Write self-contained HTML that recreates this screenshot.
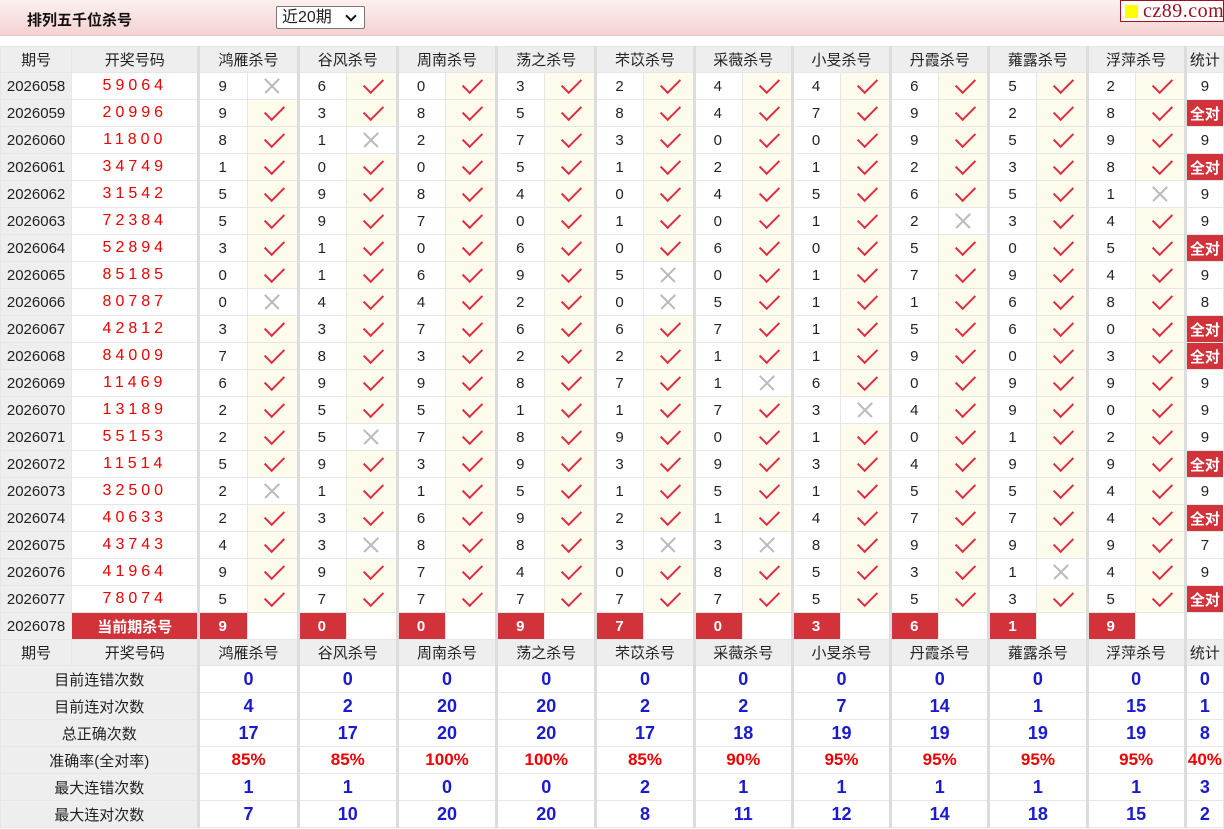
<!DOCTYPE html>
<html><head><meta charset="utf-8">
<style>
*{margin:0;padding:0;box-sizing:border-box}
body{width:1224px;height:829px;overflow:hidden;background:#fff;font-family:"Liberation Sans","Noto Sans CJK SC",sans-serif;color:#222}
.top{height:36px;background:linear-gradient(#fdf0f0,#f4d2d2);border-bottom:1px solid #e8c8c8;position:relative}
.top .t{position:absolute;left:27px;top:9px;font-size:15px;font-weight:bold;color:#111}
.top .s{position:absolute;left:276px;top:6px;width:89px;height:23px;border:1px solid #777;border-radius:2px;background:#fff;font-size:16px;padding-left:5px;line-height:21px}
.top .s:after{content:"";position:absolute;right:9px;top:5px;width:6px;height:6px;border-right:2px solid #111;border-bottom:2px solid #111;transform:rotate(45deg)}
.logo{position:absolute;right:0;top:0;width:104px;height:22px;border:1px solid #a01020;background:#fff;font-family:"Liberation Serif",serif;font-size:20px;color:#9a1020;line-height:20px;padding-left:22px;letter-spacing:.5px}
.logo:before{content:"";position:absolute;left:4px;top:4px;width:13px;height:13px;background:#ff0}
table{position:absolute;top:46px;left:0;border-collapse:collapse;table-layout:fixed;width:1224px}
td{border:1px solid #e6e6e6;height:27px;text-align:center;font-size:15px;padding:0;white-space:nowrap;overflow:hidden;position:relative}
tr.h td{background:#eee;height:26px;font-size:15px;color:#222}
td.p{background:#eee}
td.d{color:#e00;letter-spacing:4px;font-size:16px}
td.g{border-left:3px solid #dcdcdc;text-align:left;padding-left:18px}
tr.h td.g{text-align:center;padding-left:0}
td.v{background:#fdfcec}
td.v:after{content:"";position:absolute;left:21px;top:1px;width:9px;height:17px;border-right:2.5px solid #e02c40;border-bottom:2.5px solid #e02c40;transform:rotate(45deg)}
td.x:before,td.x:after{content:"";position:absolute;left:14px;top:12px;width:20px;height:1.5px;background:#bbb;transform:rotate(45deg)}
td.x:after{transform:rotate(-45deg)}
td.q{color:#fff;font-weight:bold;background:#d2323a}
td.a{background:#d2323a;color:#fff;font-weight:bold;font-size:15px}
td.gs{border-left:3px solid #dcdcdc}
td.L{background:#eee}
td.b{color:#1a1ad0;font-weight:bold;font-size:18px}
td.r{color:#e00;font-weight:bold;font-size:17px}
</style></head><body>
<div class="top"><div class="t">排列五千位杀号</div><div class="s">近20期</div><div class="logo">cz89.com</div></div>
<table>
<colgroup><col style="width:71px"><col style="width:127px">
<col style="width:48px"><col style="width:51px"><col style="width:48px"><col style="width:51px"><col style="width:48px"><col style="width:51px"><col style="width:48px"><col style="width:51px"><col style="width:48px"><col style="width:50px"><col style="width:48px"><col style="width:50px"><col style="width:48px"><col style="width:50px"><col style="width:48px"><col style="width:50px"><col style="width:48px"><col style="width:50px"><col style="width:48px"><col style="width:50px"><col style="width:38px"></colgroup>
<tr class="h"><td>期号</td><td>开奖号码</td><td class="g" colspan="2">鸿雁杀号</td><td class="g" colspan="2">谷风杀号</td><td class="g" colspan="2">周南杀号</td><td class="g" colspan="2">荡之杀号</td><td class="g" colspan="2">芣苡杀号</td><td class="g" colspan="2">采薇杀号</td><td class="g" colspan="2">小旻杀号</td><td class="g" colspan="2">丹霞杀号</td><td class="g" colspan="2">蕹露杀号</td><td class="g" colspan="2">浮萍杀号</td><td class="g">统计</td></tr>
<tr><td class="p">2026058</td><td class="d">59064</td><td class="g">9</td><td class="x"></td><td class="g">6</td><td class="v"></td><td class="g">0</td><td class="v"></td><td class="g">3</td><td class="v"></td><td class="g">2</td><td class="v"></td><td class="g">4</td><td class="v"></td><td class="g">4</td><td class="v"></td><td class="g">6</td><td class="v"></td><td class="g">5</td><td class="v"></td><td class="g">2</td><td class="v"></td><td class="gs">9</td></tr>
<tr><td class="p">2026059</td><td class="d">20996</td><td class="g">9</td><td class="v"></td><td class="g">3</td><td class="v"></td><td class="g">8</td><td class="v"></td><td class="g">5</td><td class="v"></td><td class="g">8</td><td class="v"></td><td class="g">4</td><td class="v"></td><td class="g">7</td><td class="v"></td><td class="g">9</td><td class="v"></td><td class="g">2</td><td class="v"></td><td class="g">8</td><td class="v"></td><td class="gs a">全对</td></tr>
<tr><td class="p">2026060</td><td class="d">11800</td><td class="g">8</td><td class="v"></td><td class="g">1</td><td class="x"></td><td class="g">2</td><td class="v"></td><td class="g">7</td><td class="v"></td><td class="g">3</td><td class="v"></td><td class="g">0</td><td class="v"></td><td class="g">0</td><td class="v"></td><td class="g">9</td><td class="v"></td><td class="g">5</td><td class="v"></td><td class="g">9</td><td class="v"></td><td class="gs">9</td></tr>
<tr><td class="p">2026061</td><td class="d">34749</td><td class="g">1</td><td class="v"></td><td class="g">0</td><td class="v"></td><td class="g">0</td><td class="v"></td><td class="g">5</td><td class="v"></td><td class="g">1</td><td class="v"></td><td class="g">2</td><td class="v"></td><td class="g">1</td><td class="v"></td><td class="g">2</td><td class="v"></td><td class="g">3</td><td class="v"></td><td class="g">8</td><td class="v"></td><td class="gs a">全对</td></tr>
<tr><td class="p">2026062</td><td class="d">31542</td><td class="g">5</td><td class="v"></td><td class="g">9</td><td class="v"></td><td class="g">8</td><td class="v"></td><td class="g">4</td><td class="v"></td><td class="g">0</td><td class="v"></td><td class="g">4</td><td class="v"></td><td class="g">5</td><td class="v"></td><td class="g">6</td><td class="v"></td><td class="g">5</td><td class="v"></td><td class="g">1</td><td class="x"></td><td class="gs">9</td></tr>
<tr><td class="p">2026063</td><td class="d">72384</td><td class="g">5</td><td class="v"></td><td class="g">9</td><td class="v"></td><td class="g">7</td><td class="v"></td><td class="g">0</td><td class="v"></td><td class="g">1</td><td class="v"></td><td class="g">0</td><td class="v"></td><td class="g">1</td><td class="v"></td><td class="g">2</td><td class="x"></td><td class="g">3</td><td class="v"></td><td class="g">4</td><td class="v"></td><td class="gs">9</td></tr>
<tr><td class="p">2026064</td><td class="d">52894</td><td class="g">3</td><td class="v"></td><td class="g">1</td><td class="v"></td><td class="g">0</td><td class="v"></td><td class="g">6</td><td class="v"></td><td class="g">0</td><td class="v"></td><td class="g">6</td><td class="v"></td><td class="g">0</td><td class="v"></td><td class="g">5</td><td class="v"></td><td class="g">0</td><td class="v"></td><td class="g">5</td><td class="v"></td><td class="gs a">全对</td></tr>
<tr><td class="p">2026065</td><td class="d">85185</td><td class="g">0</td><td class="v"></td><td class="g">1</td><td class="v"></td><td class="g">6</td><td class="v"></td><td class="g">9</td><td class="v"></td><td class="g">5</td><td class="x"></td><td class="g">0</td><td class="v"></td><td class="g">1</td><td class="v"></td><td class="g">7</td><td class="v"></td><td class="g">9</td><td class="v"></td><td class="g">4</td><td class="v"></td><td class="gs">9</td></tr>
<tr><td class="p">2026066</td><td class="d">80787</td><td class="g">0</td><td class="x"></td><td class="g">4</td><td class="v"></td><td class="g">4</td><td class="v"></td><td class="g">2</td><td class="v"></td><td class="g">0</td><td class="x"></td><td class="g">5</td><td class="v"></td><td class="g">1</td><td class="v"></td><td class="g">1</td><td class="v"></td><td class="g">6</td><td class="v"></td><td class="g">8</td><td class="v"></td><td class="gs">8</td></tr>
<tr><td class="p">2026067</td><td class="d">42812</td><td class="g">3</td><td class="v"></td><td class="g">3</td><td class="v"></td><td class="g">7</td><td class="v"></td><td class="g">6</td><td class="v"></td><td class="g">6</td><td class="v"></td><td class="g">7</td><td class="v"></td><td class="g">1</td><td class="v"></td><td class="g">5</td><td class="v"></td><td class="g">6</td><td class="v"></td><td class="g">0</td><td class="v"></td><td class="gs a">全对</td></tr>
<tr><td class="p">2026068</td><td class="d">84009</td><td class="g">7</td><td class="v"></td><td class="g">8</td><td class="v"></td><td class="g">3</td><td class="v"></td><td class="g">2</td><td class="v"></td><td class="g">2</td><td class="v"></td><td class="g">1</td><td class="v"></td><td class="g">1</td><td class="v"></td><td class="g">9</td><td class="v"></td><td class="g">0</td><td class="v"></td><td class="g">3</td><td class="v"></td><td class="gs a">全对</td></tr>
<tr><td class="p">2026069</td><td class="d">11469</td><td class="g">6</td><td class="v"></td><td class="g">9</td><td class="v"></td><td class="g">9</td><td class="v"></td><td class="g">8</td><td class="v"></td><td class="g">7</td><td class="v"></td><td class="g">1</td><td class="x"></td><td class="g">6</td><td class="v"></td><td class="g">0</td><td class="v"></td><td class="g">9</td><td class="v"></td><td class="g">9</td><td class="v"></td><td class="gs">9</td></tr>
<tr><td class="p">2026070</td><td class="d">13189</td><td class="g">2</td><td class="v"></td><td class="g">5</td><td class="v"></td><td class="g">5</td><td class="v"></td><td class="g">1</td><td class="v"></td><td class="g">1</td><td class="v"></td><td class="g">7</td><td class="v"></td><td class="g">3</td><td class="x"></td><td class="g">4</td><td class="v"></td><td class="g">9</td><td class="v"></td><td class="g">0</td><td class="v"></td><td class="gs">9</td></tr>
<tr><td class="p">2026071</td><td class="d">55153</td><td class="g">2</td><td class="v"></td><td class="g">5</td><td class="x"></td><td class="g">7</td><td class="v"></td><td class="g">8</td><td class="v"></td><td class="g">9</td><td class="v"></td><td class="g">0</td><td class="v"></td><td class="g">1</td><td class="v"></td><td class="g">0</td><td class="v"></td><td class="g">1</td><td class="v"></td><td class="g">2</td><td class="v"></td><td class="gs">9</td></tr>
<tr><td class="p">2026072</td><td class="d">11514</td><td class="g">5</td><td class="v"></td><td class="g">9</td><td class="v"></td><td class="g">3</td><td class="v"></td><td class="g">9</td><td class="v"></td><td class="g">3</td><td class="v"></td><td class="g">9</td><td class="v"></td><td class="g">3</td><td class="v"></td><td class="g">4</td><td class="v"></td><td class="g">9</td><td class="v"></td><td class="g">9</td><td class="v"></td><td class="gs a">全对</td></tr>
<tr><td class="p">2026073</td><td class="d">32500</td><td class="g">2</td><td class="x"></td><td class="g">1</td><td class="v"></td><td class="g">1</td><td class="v"></td><td class="g">5</td><td class="v"></td><td class="g">1</td><td class="v"></td><td class="g">5</td><td class="v"></td><td class="g">1</td><td class="v"></td><td class="g">5</td><td class="v"></td><td class="g">5</td><td class="v"></td><td class="g">4</td><td class="v"></td><td class="gs">9</td></tr>
<tr><td class="p">2026074</td><td class="d">40633</td><td class="g">2</td><td class="v"></td><td class="g">3</td><td class="v"></td><td class="g">6</td><td class="v"></td><td class="g">9</td><td class="v"></td><td class="g">2</td><td class="v"></td><td class="g">1</td><td class="v"></td><td class="g">4</td><td class="v"></td><td class="g">7</td><td class="v"></td><td class="g">7</td><td class="v"></td><td class="g">4</td><td class="v"></td><td class="gs a">全对</td></tr>
<tr><td class="p">2026075</td><td class="d">43743</td><td class="g">4</td><td class="v"></td><td class="g">3</td><td class="x"></td><td class="g">8</td><td class="v"></td><td class="g">8</td><td class="v"></td><td class="g">3</td><td class="x"></td><td class="g">3</td><td class="x"></td><td class="g">8</td><td class="v"></td><td class="g">9</td><td class="v"></td><td class="g">9</td><td class="v"></td><td class="g">9</td><td class="v"></td><td class="gs">7</td></tr>
<tr><td class="p">2026076</td><td class="d">41964</td><td class="g">9</td><td class="v"></td><td class="g">9</td><td class="v"></td><td class="g">7</td><td class="v"></td><td class="g">4</td><td class="v"></td><td class="g">0</td><td class="v"></td><td class="g">8</td><td class="v"></td><td class="g">5</td><td class="v"></td><td class="g">3</td><td class="v"></td><td class="g">1</td><td class="x"></td><td class="g">4</td><td class="v"></td><td class="gs">9</td></tr>
<tr><td class="p">2026077</td><td class="d">78074</td><td class="g">5</td><td class="v"></td><td class="g">7</td><td class="v"></td><td class="g">7</td><td class="v"></td><td class="g">7</td><td class="v"></td><td class="g">7</td><td class="v"></td><td class="g">7</td><td class="v"></td><td class="g">5</td><td class="v"></td><td class="g">5</td><td class="v"></td><td class="g">3</td><td class="v"></td><td class="g">5</td><td class="v"></td><td class="gs a">全对</td></tr>
<tr><td class="p">2026078</td><td class="q">当前期杀号</td><td class="g q">9</td><td></td><td class="g q">0</td><td></td><td class="g q">0</td><td></td><td class="g q">9</td><td></td><td class="g q">7</td><td></td><td class="g q">0</td><td></td><td class="g q">3</td><td></td><td class="g q">6</td><td></td><td class="g q">1</td><td></td><td class="g q">9</td><td></td><td class="gs"></td></tr>
<tr class="h"><td>期号</td><td>开奖号码</td><td class="g" colspan="2">鸿雁杀号</td><td class="g" colspan="2">谷风杀号</td><td class="g" colspan="2">周南杀号</td><td class="g" colspan="2">荡之杀号</td><td class="g" colspan="2">芣苡杀号</td><td class="g" colspan="2">采薇杀号</td><td class="g" colspan="2">小旻杀号</td><td class="g" colspan="2">丹霞杀号</td><td class="g" colspan="2">蕹露杀号</td><td class="g" colspan="2">浮萍杀号</td><td class="g">统计</td></tr>
<tr><td class="L" colspan="2">目前连错次数</td><td class="gs b" colspan="2">0</td><td class="gs b" colspan="2">0</td><td class="gs b" colspan="2">0</td><td class="gs b" colspan="2">0</td><td class="gs b" colspan="2">0</td><td class="gs b" colspan="2">0</td><td class="gs b" colspan="2">0</td><td class="gs b" colspan="2">0</td><td class="gs b" colspan="2">0</td><td class="gs b" colspan="2">0</td><td class="gs b">0</td></tr>
<tr><td class="L" colspan="2">目前连对次数</td><td class="gs b" colspan="2">4</td><td class="gs b" colspan="2">2</td><td class="gs b" colspan="2">20</td><td class="gs b" colspan="2">20</td><td class="gs b" colspan="2">2</td><td class="gs b" colspan="2">2</td><td class="gs b" colspan="2">7</td><td class="gs b" colspan="2">14</td><td class="gs b" colspan="2">1</td><td class="gs b" colspan="2">15</td><td class="gs b">1</td></tr>
<tr><td class="L" colspan="2">总正确次数</td><td class="gs b" colspan="2">17</td><td class="gs b" colspan="2">17</td><td class="gs b" colspan="2">20</td><td class="gs b" colspan="2">20</td><td class="gs b" colspan="2">17</td><td class="gs b" colspan="2">18</td><td class="gs b" colspan="2">19</td><td class="gs b" colspan="2">19</td><td class="gs b" colspan="2">19</td><td class="gs b" colspan="2">19</td><td class="gs b">8</td></tr>
<tr><td class="L" colspan="2">准确率(全对率)</td><td class="gs r" colspan="2">85%</td><td class="gs r" colspan="2">85%</td><td class="gs r" colspan="2">100%</td><td class="gs r" colspan="2">100%</td><td class="gs r" colspan="2">85%</td><td class="gs r" colspan="2">90%</td><td class="gs r" colspan="2">95%</td><td class="gs r" colspan="2">95%</td><td class="gs r" colspan="2">95%</td><td class="gs r" colspan="2">95%</td><td class="gs r">40%</td></tr>
<tr><td class="L" colspan="2">最大连错次数</td><td class="gs b" colspan="2">1</td><td class="gs b" colspan="2">1</td><td class="gs b" colspan="2">0</td><td class="gs b" colspan="2">0</td><td class="gs b" colspan="2">2</td><td class="gs b" colspan="2">1</td><td class="gs b" colspan="2">1</td><td class="gs b" colspan="2">1</td><td class="gs b" colspan="2">1</td><td class="gs b" colspan="2">1</td><td class="gs b">3</td></tr>
<tr><td class="L" colspan="2">最大连对次数</td><td class="gs b" colspan="2">7</td><td class="gs b" colspan="2">10</td><td class="gs b" colspan="2">20</td><td class="gs b" colspan="2">20</td><td class="gs b" colspan="2">8</td><td class="gs b" colspan="2">11</td><td class="gs b" colspan="2">12</td><td class="gs b" colspan="2">14</td><td class="gs b" colspan="2">18</td><td class="gs b" colspan="2">15</td><td class="gs b">2</td></tr>
</table>
</body></html>
